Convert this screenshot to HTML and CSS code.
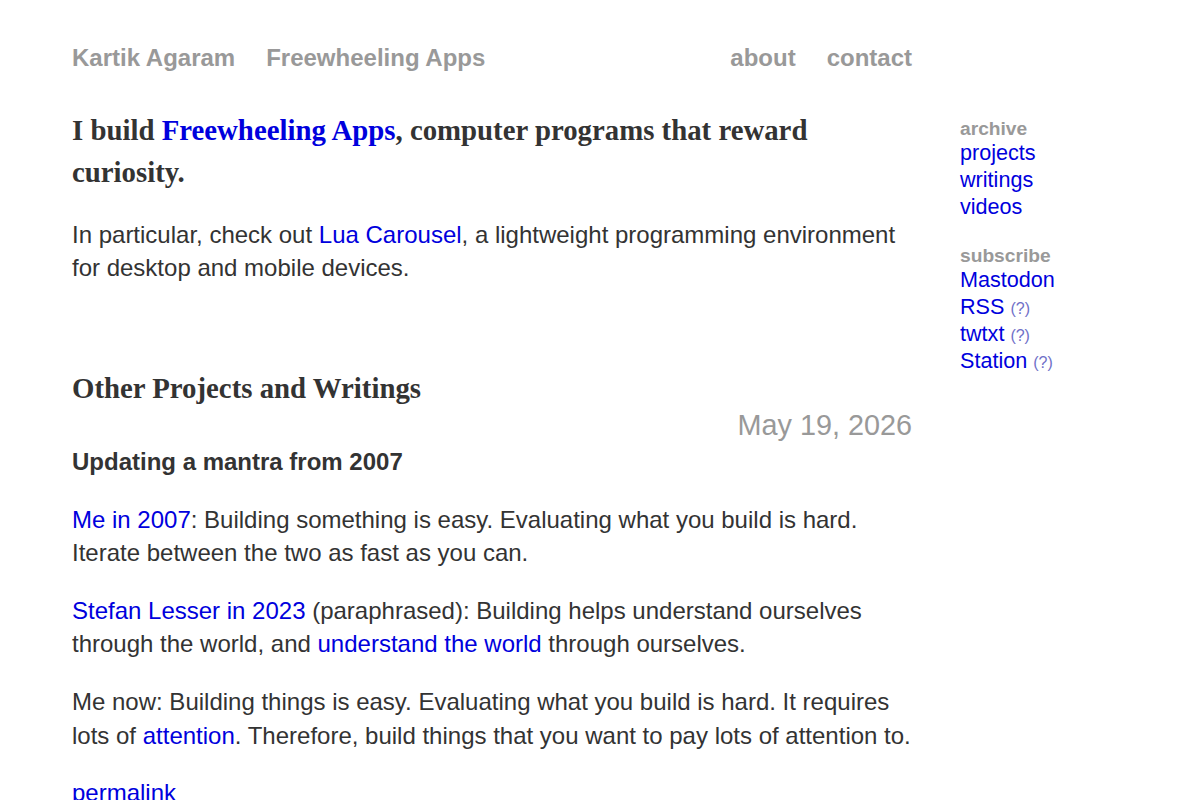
FILE: index.html
```html
<!DOCTYPE html>
<html lang="en">
<head>
    <meta charset="UTF-8">
    <meta name="viewport" content="width=device-width, initial-scale=1.0">
    <title>Kartik Agaram</title>
    <link rel="stylesheet" href="styles.css">
</head>
<body>
    <div class="page">
        <div class="main">
            <nav class="topnav">
                <a href="#">Kartik Agaram</a>
                <a href="#">Freewheeling Apps</a>
                <span class="spacer"></span>
                <a href="#">about</a>
                <a href="#">contact</a>
            </nav>

            <h1 class="hero">I build <a href="#">Freewheeling Apps</a>, computer programs that reward curiosity.</h1>
            <p>In particular, check out <a href="#">Lua Carousel</a>, a lightweight programming environment for desktop and mobile devices.</p>

            <h2 class="section">Other Projects and Writings</h2>

            <div class="post">
                <div class="date">May 19, 2026</div>
                <h3>Updating a mantra from 2007</h3>
                <p><a href="#">Me in 2007</a>: Building something is easy. Evaluating what you build is hard. Iterate between the two as fast as you can.</p>
                <p><a href="#">Stefan Lesser in 2023</a> (paraphrased): Building helps understand ourselves through the world, and <a href="#">understand the world</a> through ourselves.</p>
                <p>Me now: Building things is easy. Evaluating what you build is hard. It requires lots of <a href="#">attention</a>. Therefore, build things that you want to pay lots of attention to.</p>
                <p><a href="#">permalink</a></p>
            </div>
        </div>

        <aside class="sidebar">
            <div class="group">
                <div class="label">archive</div>
                <div class="item"><a href="#">projects</a></div>
                <div class="item"><a href="#">writings</a></div>
                <div class="item"><a href="#">videos</a></div>
            </div>
            <div class="group">
                <div class="label">subscribe</div>
                <div class="item"><a href="#">Mastodon</a></div>
                <div class="item"><a href="#">RSS</a> <a class="help" href="#">(?)</a></div>
                <div class="item"><a href="#">twtxt</a> <a class="help" href="#">(?)</a></div>
                <div class="item"><a href="#">Station</a> <a class="help" href="#">(?)</a></div>
            </div>
        </aside>
    </div>
</body>
</html>
```

FILE: styles.css
```css
body { margin: 0; font-family: "Liberation Sans", Arial, sans-serif; font-size: 24px; line-height: 1.4; color: #333; background: #fff; }
a { color: #0000dd; text-decoration: none; }

.page { display: flex; padding: 41px 0 0 72px; }
.main { width: 840px; flex: none; }

.topnav { display: flex; gap: 31px; font-weight: bold; }
.topnav a { color: #999; }
.topnav .spacer { flex: 1; }

.hero {
    font-family: "Liberation Serif", "Times New Roman", serif;
    font-size: 28.8px;
    line-height: 42px;
    margin: 34px 0 25px;
}
p { margin: 24px 0; }

.section {
    font-family: "Liberation Serif", "Times New Roman", serif;
    font-size: 28.8px;
    line-height: 42px;
    margin: 82px 0 0;
}
.date { text-align: right; color: #999; font-size: 28.8px; line-height: 1.4; margin-top: -4px; }
.post h3 { font-size: 24px; margin: 0; line-height: 1.4; }

.sidebar { margin-left: 48px; padding-top: 78px; }
.group { font-size: 21.6px; margin-bottom: 26px; }
.group .label { color: #999; font-weight: bold; font-size: 19.2px; line-height: 20px; }
.group .item { height: 27px; line-height: 27px; }
.help { color: #7070c8; font-size: 16px; line-height: 1; }
```
